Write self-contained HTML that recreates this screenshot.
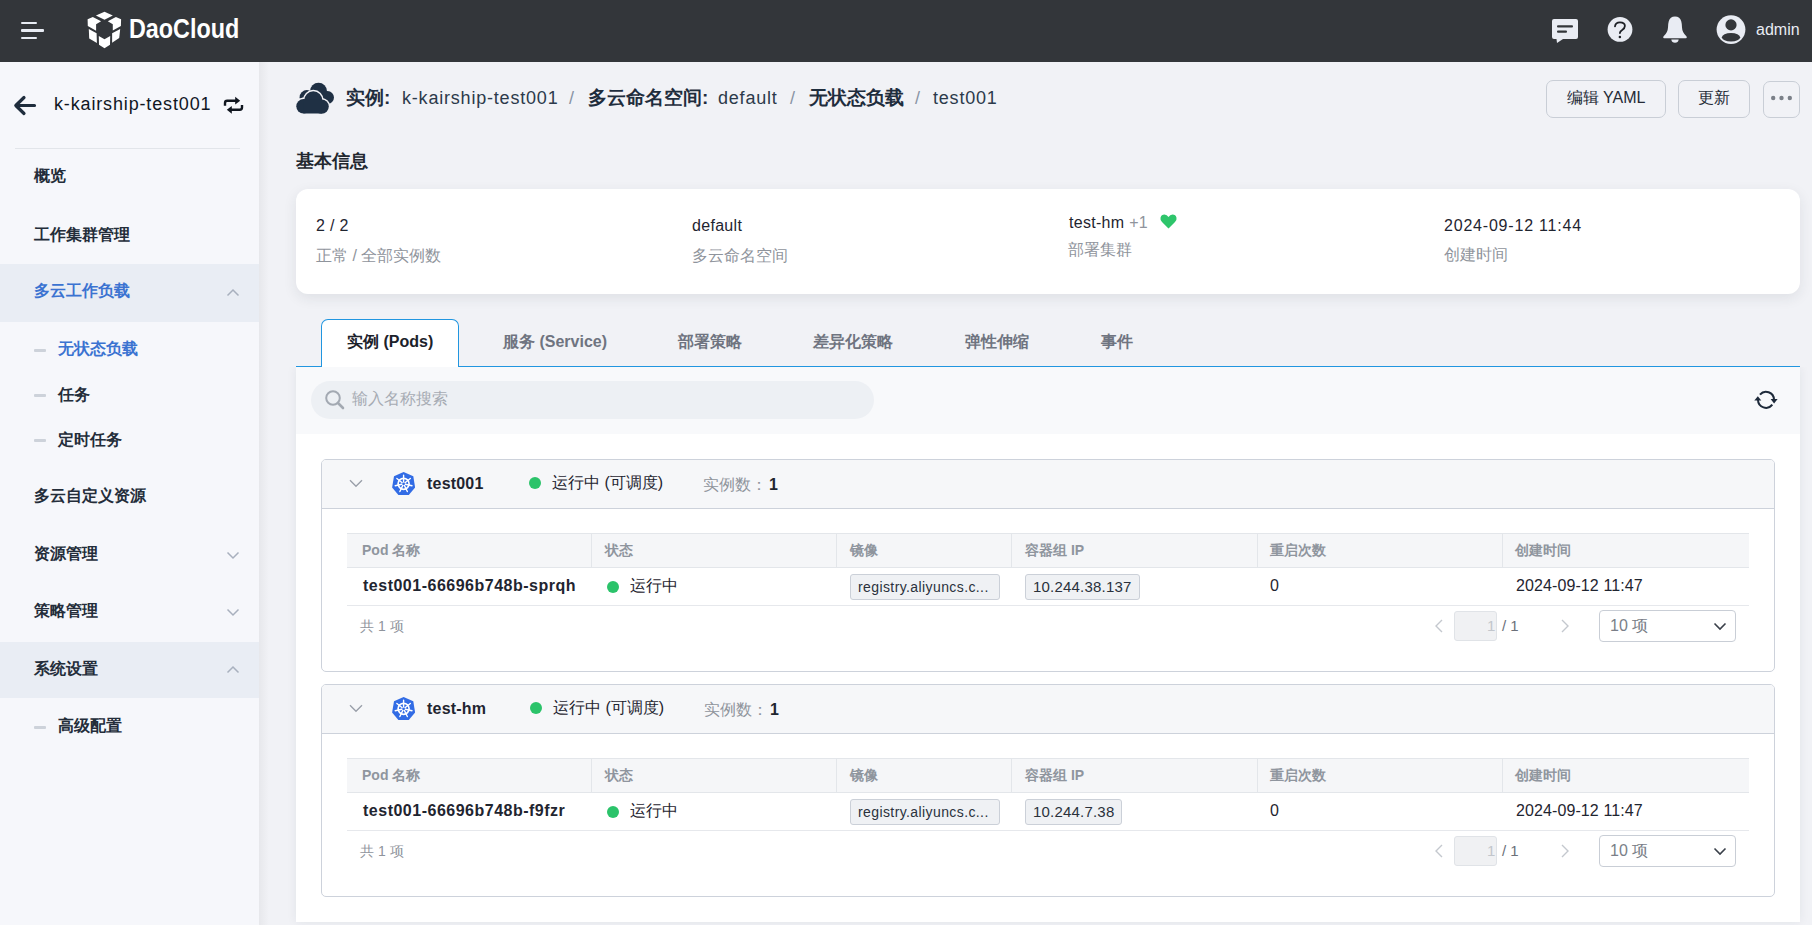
<!DOCTYPE html>
<html><head><meta charset="utf-8">
<style>
*{box-sizing:border-box;margin:0;padding:0}
html,body{width:1812px;height:925px;overflow:hidden}
body{font-family:"Liberation Sans",sans-serif;background:#f1f2f6;color:#1f2733;position:relative}
.a{position:absolute;white-space:nowrap}
#hdr{position:absolute;left:0;top:0;width:1812px;height:62px;background:#33363a}
#side{position:absolute;left:0;top:62px;width:259px;height:863px;background:#f6f7fb}
#sideshadow{position:absolute;left:259px;top:62px;width:10px;height:863px;background:linear-gradient(to right,rgba(0,0,0,0.045),rgba(0,0,0,0))}
.mi{position:absolute;left:34px;font-size:16px;font-weight:bold;color:#242d3a;line-height:16px;white-space:nowrap}
.band{position:absolute;left:0;width:259px;height:57px;background:#e9edf4}
.dash{position:absolute;left:34px;width:12px;height:3px;background:#cdd2da;border-radius:1px}
.sub{left:58px}
.bc{font-size:18px;line-height:18px;color:#2c3a4b;letter-spacing:0.8px}
.bcb{font-size:19px;line-height:18px;font-weight:bold;color:#1f2d3d}
.sl{font-size:18px;line-height:18px;color:#8a95a5}
.btn{position:absolute;top:80px;height:38px;border:1px solid #c9ced6;border-radius:7px;background:#f1f2f6;font-size:16px;color:#252b36;text-align:center;line-height:34px}
.card{position:absolute;left:296px;top:189px;width:1504px;height:105px;background:#fff;border-radius:12px;box-shadow:0 4px 14px rgba(30,40,60,0.09)}
.val{font-size:16px;line-height:16px;color:#1f2530;letter-spacing:0.3px}
.lbl{font-size:16px;line-height:16px;color:#8f949c}
.tab{font-size:16px;line-height:16px;font-weight:bold;color:#6f7480}
.grp{position:absolute;left:321px;width:1454px;height:213px;border:1px solid #cdd2db;border-radius:5px;background:#fff;overflow:hidden}
.gh{position:absolute;left:0;top:0;width:1452px;height:49px;background:#f6f7f9;border-bottom:1px solid #cdd2db}
.th{position:absolute;left:25px;top:73px;width:1402px;height:35px;background:#f5f6f8;border-top:1px solid #e3e6ea;border-bottom:1px solid #e3e6ea}
.thc{position:absolute;top:0;height:33px;border-left:1px solid #e3e6ea}
.tht{font-size:14px;line-height:13px;font-weight:bold;color:#8f959e}
.rowb{position:absolute;left:25px;top:145px;width:1402px;height:1px;background:#e6e8ec}
.dot{position:absolute;width:12px;height:12px;border-radius:50%;background:#2bc36a}
.tag{position:absolute;height:26px;border:1px solid #cbd0d8;border-radius:3px;background:#eff1f4;font-size:14px;line-height:24px;color:#2a313c;padding-left:7px;letter-spacing:0.4px}
.pg{font-size:15px;line-height:15px}
</style></head><body>
<div id="hdr">
  <div class="a" style="left:21px;top:22px;width:16px;height:2px;background:#e8ecf4;border-radius:1px"></div>
  <div class="a" style="left:21px;top:29px;width:23px;height:3px;background:#e8ecf4;border-radius:1px"></div>
  <div class="a" style="left:21px;top:37px;width:16px;height:2px;background:#e8ecf4;border-radius:1px"></div>
  <svg class="a" style="left:84px;top:8px" width="42" height="44" viewBox="0 0 42 44">
    <g fill="#fff">
    <path d="M20.5 3.8 L28.8 7.4 L20.5 11.7 L11.9 7.4 Z"/>
    <path d="M3.6 11.2 L8.8 9 L17.1 13.3 L12.1 16.2 L12.1 22.8 L3.8 18.1 Z"/>
    <path d="M37.1 11.2 L31.9 9 L23.8 13.3 L28.8 16.2 L28.8 22.4 L36.9 17.9 Z"/>
    <path d="M4.8 21 L12.6 25.2 L12.9 35 L5.2 30.5 Z"/>
    <path d="M36.2 21 L28.1 25.2 L28.1 34.8 L35.2 30 Z"/>
    <path d="M14.8 27.9 L20.5 31.2 L26.2 27.9 L26 36.7 L20.5 40.2 L15 36.7 Z"/>
    </g>
  </svg>
  <div class="a" style="left:129px;top:14px;font-size:27px;line-height:30px;font-weight:bold;color:#fff;transform-origin:0 0;transform:scaleX(0.865)">DaoCloud</div>

  <!-- chat -->
  <svg class="a" style="left:1550px;top:17px" width="30" height="28" viewBox="0 0 30 28">
    <path fill="#e9ecf3" d="M4 2 H26 Q28 2 28 4 V20 Q28 22 26 22 H13 L7 26 L6.5 22 H4 Q2 22 2 20 V4 Q2 2 4 2 Z"/>
    <rect x="7" y="8.3" width="16" height="2.2" rx="1" fill="#33363a"/>
    <rect x="7" y="13.6" width="10" height="2.2" rx="1" fill="#33363a"/>
  </svg>
  <!-- help -->
  <svg class="a" style="left:1606px;top:15px" width="28" height="29" viewBox="0 0 28 29">
    <circle cx="14" cy="14.4" r="12.4" fill="#e9ecf3"/>
    <path d="M9 11.3 Q9.6 7.4 13.9 7.4 Q18.9 7.4 18.9 11.1 Q18.9 13.3 16.2 14.9 Q13.9 16.3 13.9 18" fill="none" stroke="#1d2026" stroke-width="1.8" stroke-linecap="round"/>
    <circle cx="13.9" cy="21.9" r="1.25" fill="#1d2026"/>
  </svg>
  <!-- bell -->
  <svg class="a" style="left:1661px;top:15px" width="28" height="30" viewBox="0 0 28 30">
    <path fill="#e9ecf3" d="M14 1.6 Q19 1.6 20.3 6.5 Q21 9 21 12.5 Q21.2 17.8 25.6 21.4 Q26.4 23.3 24.6 23.3 H3.4 Q1.6 23.3 2.4 21.4 Q6.8 17.8 7 12.5 Q7 9 7.7 6.5 Q9 1.6 14 1.6 Z"/>
    <path fill="#e9ecf3" d="M10.3 24.6 H17.7 Q17.2 27.8 14 27.8 Q10.8 27.8 10.3 24.6 Z"/>
  </svg>
  <!-- user -->
  <svg class="a" style="left:1716px;top:15px" width="30" height="30" viewBox="0 0 30 30">
    <circle cx="15" cy="14.6" r="14.4" fill="#e9ecf3"/>
    <circle cx="15" cy="9.9" r="5.6" fill="#33363a"/>
    <ellipse cx="15" cy="22.2" rx="9.1" ry="4.3" fill="#33363a"/>
  </svg>
  <div class="a" style="left:1756px;top:22px;font-size:16px;line-height:16px;color:#e9ecf3">admin</div>
</div>

<div id="side">
  <svg class="a" style="left:13px;top:33px" width="24" height="21" viewBox="0 0 24 21">
    <path d="M11 2.5 L2.8 10.5 L11 18.5 M3 10.5 H21.5" fill="none" stroke="#1f2d3d" stroke-width="3.2" stroke-linecap="round" stroke-linejoin="round"/>
  </svg>
  <div class="a" style="left:54px;top:33px;font-size:18px;line-height:18px;color:#10161f;letter-spacing:0.85px">k-kairship-test001</div>
  <svg class="a" style="left:218px;top:28px" width="32" height="30" viewBox="0 0 32 30">
    <path d="M7 15.8 V12.9 Q7 10.7 9.2 10.7 H18" fill="none" stroke="#10161f" stroke-width="2.4"/>
    <path d="M17.2 6.8 L22.2 10.7 L17.2 14.6 Z" fill="#10161f"/>
    <path d="M24 15.1 V17.6 Q24 19.8 21.8 19.8 H13" fill="none" stroke="#10161f" stroke-width="2.4"/>
    <path d="M13.8 15.9 L8.8 19.8 L13.8 23.7 Z" fill="#10161f"/>
  </svg>
  <div class="a" style="left:15px;top:86px;width:225px;height:1px;background:#e2e5ea"></div>

  <div class="mi" style="top:106px">概览</div>
  <div class="mi" style="top:165px">工作集群管理</div>
  <div class="band" style="top:202px;height:58px"></div>
  <div class="mi" style="top:221px;color:#3b73d1">多云工作负载</div>
  <svg class="a" style="left:226px;top:226px" width="14" height="9" viewBox="0 0 14 9"><path d="M1.5 7.5 L7 2 L12.5 7.5" fill="none" stroke="#a8b0be" stroke-width="1.5"/></svg>
  <div class="dash" style="top:287px"></div>
  <div class="mi sub" style="top:279px;color:#3b73d1">无状态负载</div>
  <div class="dash" style="top:332px"></div>
  <div class="mi sub" style="top:325px">任务</div>
  <div class="dash" style="top:377px"></div>
  <div class="mi sub" style="top:370px">定时任务</div>
  <div class="mi" style="top:426px">多云自定义资源</div>
  <div class="mi" style="top:484px">资源管理</div>
  <svg class="a" style="left:226px;top:489px" width="14" height="9" viewBox="0 0 14 9"><path d="M1.5 1.5 L7 7 L12.5 1.5" fill="none" stroke="#a8b0be" stroke-width="1.5"/></svg>
  <div class="mi" style="top:541px">策略管理</div>
  <svg class="a" style="left:226px;top:546px" width="14" height="9" viewBox="0 0 14 9"><path d="M1.5 1.5 L7 7 L12.5 1.5" fill="none" stroke="#a8b0be" stroke-width="1.5"/></svg>
  <div class="band" style="top:580px;height:56px"></div>
  <div class="mi" style="top:599px">系统设置</div>
  <svg class="a" style="left:226px;top:603px" width="14" height="9" viewBox="0 0 14 9"><path d="M1.5 7.5 L7 2 L12.5 7.5" fill="none" stroke="#a8b0be" stroke-width="1.5"/></svg>
  <div class="dash" style="top:664px"></div>
  <div class="mi sub" style="top:656px">高级配置</div>
</div>
<div id="sideshadow"></div>

<!-- breadcrumb -->
<svg class="a" style="left:292px;top:78px" width="48" height="40" viewBox="0 0 48 40">
  <g fill="#1f3044">
    <circle cx="26.5" cy="13.3" r="8.5"/><circle cx="35.5" cy="19.5" r="6.5"/><circle cx="14.8" cy="19.3" r="7.2"/>
    <rect x="15" y="13" width="20" height="13"/>
  </g>
  <g fill="#f1f2f6" stroke="#f1f2f6" stroke-width="3">
    <circle cx="11.5" cy="28.3" r="7.2"/><circle cx="21.3" cy="22.3" r="9"/><circle cx="29.6" cy="28.6" r="7.2"/><rect x="11.5" y="21.3" width="18.1" height="14.2"/>
  </g>
  <g fill="#1f3044">
    <circle cx="11.5" cy="28.3" r="7.2"/><circle cx="21.3" cy="22.3" r="9"/><circle cx="29.6" cy="28.6" r="7.2"/><rect x="11.5" y="21.3" width="18.1" height="14.2"/>
  </g>
</svg>
<div class="a bcb" style="left:346px;top:89px">实例:</div>
<div class="a bc" style="left:402px;top:89px">k-kairship-test001</div>
<div class="a sl" style="left:569px;top:89px">/</div>
<div class="a bcb" style="left:588px;top:89px">多云命名空间:</div>
<div class="a bc" style="left:718px;top:89px">default</div>
<div class="a sl" style="left:790px;top:89px">/</div>
<div class="a bcb" style="left:809px;top:89px">无状态负载</div>
<div class="a sl" style="left:915px;top:89px">/</div>
<div class="a bc" style="left:933px;top:89px">test001</div>

<div class="btn" style="left:1546px;width:120px">编辑 YAML</div>
<div class="btn" style="left:1678px;width:72px">更新</div>
<div class="btn" style="left:1763px;width:37px;top:81px;height:37px">
  <svg style="position:absolute;left:6px;top:13px" width="24" height="6" viewBox="0 0 24 6"><circle cx="3.2" cy="3" r="2.2" fill="#7b8088"/><circle cx="11.5" cy="3" r="2.2" fill="#7b8088"/><circle cx="19.8" cy="3" r="2.2" fill="#7b8088"/></svg>
</div>

<div class="a" style="left:296px;top:152px;font-size:17.5px;line-height:18px;font-weight:bold;color:#22272f">基本信息</div>

<div class="card">
  <div class="a val" style="left:20px;top:29px">2 / 2</div>
  <div class="a lbl" style="left:20px;top:59px">正常 / 全部实例数</div>
  <div class="a val" style="left:396px;top:29px">default</div>
  <div class="a lbl" style="left:396px;top:59px">多云命名空间</div>
  <div class="a val" style="left:773px;top:26px">test-hm <span style="color:#8f949c">+1</span></div>
  <svg class="a" style="left:864px;top:25px" width="17" height="15" viewBox="0 0 17 15"><path fill="#2ec56b" d="M8.5 14.5 L2 8 Q0 6 0.5 3.8 Q1.3 0.5 4.5 0.5 Q7 0.5 8.5 3 Q10 0.5 12.5 0.5 Q15.7 0.5 16.5 3.8 Q17 6 15 8 Z"/></svg>
  <div class="a lbl" style="left:772px;top:53px">部署集群</div>
  <div class="a val" style="left:1148px;top:29px;letter-spacing:0.8px">2024-09-12 11:44</div>
  <div class="a lbl" style="left:1148px;top:58px">创建时间</div>
</div>

<!-- tabs -->
<div class="a" style="left:296px;top:366px;width:1504px;height:1px;background:#2196e0"></div>
<div class="a" style="left:321px;top:319px;width:138px;height:48px;background:#fff;border:1px solid #2196e0;border-bottom:none;border-radius:7px 7px 0 0"></div>
<div class="a tab" style="left:347px;top:334px;color:#1c222b">实例 (Pods)</div>
<div class="a tab" style="left:503px;top:334px">服务 (Service)</div>
<div class="a tab" style="left:678px;top:334px">部署策略</div>
<div class="a tab" style="left:813px;top:334px">差异化策略</div>
<div class="a tab" style="left:965px;top:334px">弹性伸缩</div>
<div class="a tab" style="left:1101px;top:334px">事件</div>

<!-- panel -->
<div class="a" style="left:296px;top:367px;width:1504px;height:555px;background:#fff;box-shadow:0 0 10px rgba(30,40,60,0.07);clip-path:inset(0 -30px -30px -30px)"></div>
<div class="a" style="left:296px;top:367px;width:1504px;height:67px;background:#f8f9fb"></div>
<div class="a" style="left:311px;top:381px;width:563px;height:38px;border-radius:19px;background:#edf0f4"></div>
<svg class="a" style="left:324px;top:389px" width="22" height="21" viewBox="0 0 22 21"><circle cx="9" cy="9" r="6.8" fill="none" stroke="#a3a9b2" stroke-width="2"/><path d="M14 14 L19 19" stroke="#a3a9b2" stroke-width="2.6" stroke-linecap="round"/></svg>
<div class="a" style="left:352px;top:391px;font-size:16px;line-height:16px;color:#a6abb3">输入名称搜索</div>
<svg class="a" style="left:1750px;top:385px" width="32" height="30" viewBox="0 0 32 30">
  <path d="M9.96 9.55 A8 8 0 0 1 24 14.5" fill="none" stroke="#1e2a3a" stroke-width="2"/>
  <path d="M22.3 19.73 A8 8 0 0 1 8 15" fill="none" stroke="#1e2a3a" stroke-width="2"/>
  <path d="M20.6 14 L27.6 14 L24.1 18.4 Z" fill="#1e2a3a"/>
  <path d="M4.3 15.6 L11.3 15.6 L7.8 11.2 Z" fill="#1e2a3a"/>
</svg>

<!-- group 1 -->
<div class="grp" style="top:459px">
  <div class="gh">
    <svg class="a" style="left:27px;top:19px" width="14" height="9" viewBox="0 0 14 9"><path d="M1 1.2 L7 7.2 L13 1.2" fill="none" stroke="#9ba1ab" stroke-width="1.4"/></svg>
    <svg class="a" style="left:66px;top:8px" width="32" height="30" viewBox="0 0 32 30">
      <path fill="#326ce5" d="M15.6 3.9 L25.3 8.3 L27.1 19.5 L20.8 26.9 H10.4 L4.1 19.5 L6 8.2 Z" />
      <circle cx="15.6" cy="15.8" r="5.5" fill="none" stroke="#fff" stroke-width="1.7"/>
      <path d="M15.60 14.00 L15.60 7.20 M17.01 14.68 L22.32 10.44 M17.35 16.20 L23.98 17.71 M16.38 17.42 L19.33 23.55 M14.82 17.42 L11.87 23.55 M13.85 16.20 L7.22 17.71 M14.19 14.68 L8.88 10.44" stroke="#fff" stroke-width="1.4" stroke-linecap="round"/>
      <circle cx="15.6" cy="15.8" r="0.9" fill="#326ce5"/>
    </svg>
    <div class="a" style="left:105px;top:16px;font-size:16px;line-height:16px;font-weight:bold;color:#1f2530;letter-spacing:0.2px">test001</div>
    <div class="dot" style="left:207px;top:17px"></div>
    <div class="a" style="left:230px;top:15px;font-size:16px;line-height:16px;color:#1f2530">运行中 (可调度)</div>
    <div class="a" style="left:381px;top:17px;font-size:16px;line-height:16px;color:#8f949c">实例数：</div>
    <div class="a" style="left:447px;top:17px;font-size:16px;line-height:16px;font-weight:bold;color:#1f2530">1</div>
  </div>
  <div class="th">
    <div class="a tht" style="left:15px;top:10px">Pod 名称</div>
    <div class="thc" style="left:244px"></div>
    <div class="a tht" style="left:258px;top:10px">状态</div>
    <div class="thc" style="left:489px"></div>
    <div class="a tht" style="left:503px;top:10px">镜像</div>
    <div class="thc" style="left:664px"></div>
    <div class="a tht" style="left:678px;top:10px">容器组 IP</div>
    <div class="thc" style="left:910px"></div>
    <div class="a tht" style="left:923px;top:10px">重启次数</div>
    <div class="thc" style="left:1155px"></div>
    <div class="a tht" style="left:1168px;top:10px">创建时间</div>
  </div>
  <div class="a" style="left:41px;top:118px;font-size:16px;line-height:16px;font-weight:bold;color:#1f2530;letter-spacing:0.5px">test001-66696b748b-sprqh</div>
  <div class="dot" style="left:285px;top:121px"></div>
  <div class="a" style="left:308px;top:118px;font-size:16px;line-height:16px;color:#1f2530">运行中</div>
  <div class="tag" style="left:528px;top:114px;width:150px">registry.aliyuncs.c...</div>
  <div class="tag" style="left:703px;top:114px;width:115px;font-size:15px;letter-spacing:0.2px">10.244.38.137</div>
  <div class="a" style="left:948px;top:118px;font-size:16px;line-height:16px;color:#1f2530">0</div>
  <div class="a" style="left:1194px;top:118px;font-size:16px;line-height:16px;color:#1f2530;letter-spacing:0.1px">2024-09-12 11:47</div>
  <div class="rowb"></div>
  <div class="a" style="left:38px;top:159px;font-size:14px;line-height:14px;color:#8f949c">共 1 项</div>
  <svg class="a" style="left:1111px;top:158px" width="12" height="16" viewBox="0 0 12 16"><path d="M9 2 L3 8 L9 14" fill="none" stroke="#c4c8ce" stroke-width="1.4"/></svg>
  <div class="a" style="left:1132px;top:151px;width:43px;height:30px;background:#f0f1f3;border:1px solid #e0e3e7;border-radius:3px"></div>
  <div class="a pg" style="left:1165px;top:158px;color:#c2c6cc">1</div>
  <div class="a pg" style="left:1180px;top:158px;color:#6b7079">/ 1</div>
  <svg class="a" style="left:1237px;top:158px" width="12" height="16" viewBox="0 0 12 16"><path d="M3 2 L9 8 L3 14" fill="none" stroke="#c4c8ce" stroke-width="1.4"/></svg>
  <div class="a" style="left:1277px;top:150px;width:137px;height:32px;border:1px solid #c9ced6;border-radius:4px"></div>
  <div class="a" style="left:1288px;top:158px;font-size:16px;line-height:16px;color:#7a7f88">10 项</div>
  <svg class="a" style="left:1391px;top:162px" width="14" height="9" viewBox="0 0 14 9"><path d="M1.5 1.5 L7 7 L12.5 1.5" fill="none" stroke="#3a404a" stroke-width="1.6"/></svg>
</div>

<!-- group 2 -->
<div class="grp" style="top:684px">
  <div class="gh">
    <svg class="a" style="left:27px;top:19px" width="14" height="9" viewBox="0 0 14 9"><path d="M1 1.2 L7 7.2 L13 1.2" fill="none" stroke="#9ba1ab" stroke-width="1.4"/></svg>
    <svg class="a" style="left:66px;top:8px" width="32" height="30" viewBox="0 0 32 30">
      <path fill="#326ce5" d="M15.6 3.9 L25.3 8.3 L27.1 19.5 L20.8 26.9 H10.4 L4.1 19.5 L6 8.2 Z" />
      <circle cx="15.6" cy="15.8" r="5.5" fill="none" stroke="#fff" stroke-width="1.7"/>
      <path d="M15.60 14.00 L15.60 7.20 M17.01 14.68 L22.32 10.44 M17.35 16.20 L23.98 17.71 M16.38 17.42 L19.33 23.55 M14.82 17.42 L11.87 23.55 M13.85 16.20 L7.22 17.71 M14.19 14.68 L8.88 10.44" stroke="#fff" stroke-width="1.4" stroke-linecap="round"/>
      <circle cx="15.6" cy="15.8" r="0.9" fill="#326ce5"/>
    </svg>
    <div class="a" style="left:105px;top:16px;font-size:16px;line-height:16px;font-weight:bold;color:#1f2530;letter-spacing:0.2px">test-hm</div>
    <div class="dot" style="left:208px;top:17px"></div>
    <div class="a" style="left:231px;top:15px;font-size:16px;line-height:16px;color:#1f2530">运行中 (可调度)</div>
    <div class="a" style="left:382px;top:17px;font-size:16px;line-height:16px;color:#8f949c">实例数：</div>
    <div class="a" style="left:448px;top:17px;font-size:16px;line-height:16px;font-weight:bold;color:#1f2530">1</div>
  </div>
  <div class="th">
    <div class="a tht" style="left:15px;top:10px">Pod 名称</div>
    <div class="thc" style="left:244px"></div>
    <div class="a tht" style="left:258px;top:10px">状态</div>
    <div class="thc" style="left:489px"></div>
    <div class="a tht" style="left:503px;top:10px">镜像</div>
    <div class="thc" style="left:664px"></div>
    <div class="a tht" style="left:678px;top:10px">容器组 IP</div>
    <div class="thc" style="left:910px"></div>
    <div class="a tht" style="left:923px;top:10px">重启次数</div>
    <div class="thc" style="left:1155px"></div>
    <div class="a tht" style="left:1168px;top:10px">创建时间</div>
  </div>
  <div class="a" style="left:41px;top:118px;font-size:16px;line-height:16px;font-weight:bold;color:#1f2530;letter-spacing:0.5px">test001-66696b748b-f9fzr</div>
  <div class="dot" style="left:285px;top:121px"></div>
  <div class="a" style="left:308px;top:118px;font-size:16px;line-height:16px;color:#1f2530">运行中</div>
  <div class="tag" style="left:528px;top:114px;width:150px">registry.aliyuncs.c...</div>
  <div class="tag" style="left:703px;top:114px;width:97px;font-size:15px;letter-spacing:0.2px">10.244.7.38</div>
  <div class="a" style="left:948px;top:118px;font-size:16px;line-height:16px;color:#1f2530">0</div>
  <div class="a" style="left:1194px;top:118px;font-size:16px;line-height:16px;color:#1f2530;letter-spacing:0.1px">2024-09-12 11:47</div>
  <div class="rowb"></div>
  <div class="a" style="left:38px;top:159px;font-size:14px;line-height:14px;color:#8f949c">共 1 项</div>
  <svg class="a" style="left:1111px;top:158px" width="12" height="16" viewBox="0 0 12 16"><path d="M9 2 L3 8 L9 14" fill="none" stroke="#c4c8ce" stroke-width="1.4"/></svg>
  <div class="a" style="left:1132px;top:151px;width:43px;height:30px;background:#f0f1f3;border:1px solid #e0e3e7;border-radius:3px"></div>
  <div class="a pg" style="left:1165px;top:158px;color:#c2c6cc">1</div>
  <div class="a pg" style="left:1180px;top:158px;color:#6b7079">/ 1</div>
  <svg class="a" style="left:1237px;top:158px" width="12" height="16" viewBox="0 0 12 16"><path d="M3 2 L9 8 L3 14" fill="none" stroke="#c4c8ce" stroke-width="1.4"/></svg>
  <div class="a" style="left:1277px;top:150px;width:137px;height:32px;border:1px solid #c9ced6;border-radius:4px"></div>
  <div class="a" style="left:1288px;top:158px;font-size:16px;line-height:16px;color:#7a7f88">10 项</div>
  <svg class="a" style="left:1391px;top:162px" width="14" height="9" viewBox="0 0 14 9"><path d="M1.5 1.5 L7 7 L12.5 1.5" fill="none" stroke="#3a404a" stroke-width="1.6"/></svg>
</div>

</body></html>
